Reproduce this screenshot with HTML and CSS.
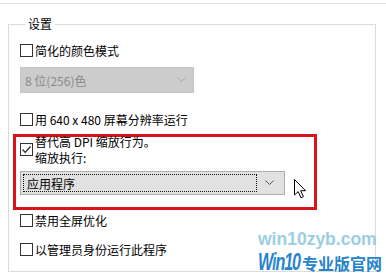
FILE: index.html
```html
<!DOCTYPE html>
<html lang="zh-CN">

<head>
    <meta charset="utf-8">
    <meta name="viewport" content="width=device-width, initial-scale=1.0">
    <title>兼容性设置</title>

    <link rel="stylesheet" href="styles.css">
</head>

<body>

    <div class="topline"></div>

    <fieldset class="gruppe">
        <legend>设置</legend>

        <label class="valg">
            <span class="boks"></span>
            <span>简化的颜色模式</span>
        </label>

        <div class="combo slukket">
            <span>8 位(256)色</span>
            <svg class="pil" width="9" height="6" viewBox="0 0 9 6"><path d="M0.5 0.5 L4.5 4.5 L8.5 0.5" fill="none" stroke="#a8a8a8"/></svg>
        </div>

        <label class="valg raekke3">
            <span class="boks"></span>
            <span>用 640 x 480 屏幕分辨率运行</span>
        </label>

        <section class="markering">
            <div class="dpi">
                <span class="boks flueben">
                    <svg width="11" height="11" viewBox="0 0 11 11"><path d="M1.5 5.5 L4.2 8.3 L9.5 2.5" fill="none" stroke="#222" stroke-width="1.2"/></svg>
                </span>
                <div class="tekst">
                    <p>替代高 DPI 缩放行为。</p>
                    <p>缩放执行:</p>
                </div>
            </div>
            <div class="comborad">
                <div class="combo aktiv">
                    <span class="fokus">应用程序</span>
                    <svg class="pil" width="9" height="6" viewBox="0 0 9 6"><path d="M0.5 0.5 L4.5 4.5 L8.5 0.5" fill="none" stroke="#555"/></svg>
                </div>
                <svg class="markoer" width="13" height="20" viewBox="0 0 13 20">
                    <path d="M0.5 0.5 L0.5 16 L4.2 12.6 L7 18.8 L9.4 17.7 L6.7 11.7 L11.6 11.7 Z" fill="#fff" stroke="#000" stroke-linejoin="round"/>
                </svg>
            </div>
        </section>

        <label class="valg efter">
            <span class="boks"></span>
            <span>禁用全屏优化</span>
        </label>

        <label class="valg sidste">
            <span class="boks"></span>
            <span>以管理员身份运行此程序</span>
        </label>
    </fieldset>

    <div class="vandmaerke">
        <p class="domaene">win10zyb.com</p>
        <p class="logo"><span class="win">W<span class="i">i</span>n10</span><span class="zh">专业版官网</span></p>
    </div>

</body></html>
```

FILE: styles.css
```css
        body {
            margin: 0;
            width: 386px;
            height: 277px;
            overflow: hidden;
            position: relative;
            background: #fff;
            font-family: "Noto Sans CJK SC", "Liberation Sans", sans-serif;
            font-size: 12px;
            color: #000;
        }

        p {
            margin: 0;
        }

        .topline {
            height: 3px;
            border-bottom: 1px solid #e3e3e3;
        }

        .gruppe {
            margin: 12px 10px 0 8px;
            padding: 0 0 12px 11px;
            border: 1px solid #dcdcdc;
            min-width: 0;
        }

        .gruppe legend {
            padding: 0 3px;
            margin-left: 5px;
            line-height: 16px;
        }

        .valg {
            display: flex;
            align-items: center;
            height: 20px;
            gap: 2px;
            margin-top: 8px;
        }

        .raekke3 {
            margin-top: 16px;
        }

        .efter {
            margin-top: 0;
        }

        .sidste {
            margin-top: 9px;
        }

        .boks {
            width: 11px;
            height: 11px;
            border: 1px solid #333;
            background: #fff;
            flex: none;
        }

        .flueben svg {
            display: block;
        }

        .combo {
            display: flex;
            align-items: center;
            justify-content: space-between;
            box-sizing: border-box;
        }

        .slukket {
            width: 174px;
            height: 26px;
            margin-top: 7px;
            padding: 0 7px 0 4px;
            background: #cccccc;
            border: 1px solid #c4c4c4;
            color: #8a8a8a;
        }

        .markering {
            width: 304px;
            height: 76px;
            box-sizing: border-box;
            margin: 5px 0 0 -7px;
            padding: 0 0 0 4px;
            border: 3px solid #d5141c;
        }

        .dpi {
            display: flex;
            gap: 2px;
        }

        .dpi .flueben {
            margin-top: 6px;
        }

        .tekst {
            margin-top: -3px;
            line-height: 16px;
        }

        .comborad {
            display: flex;
            align-items: flex-start;
            gap: 9px;
            margin-top: 5px;
        }

        .aktiv {
            width: 265px;
            height: 24px;
            padding: 2px 10px 2px 2px;
            background: #e1e1e1;
            border: 1px solid #adadad;
        }

        .fokus {
            flex: 1;
            height: 18px;
            line-height: 18px;
            padding-left: 3px;
            margin-right: 8px;
            border: 1px dotted #111;
            box-sizing: border-box;
        }

        .markoer {
            margin-top: 8px;
        }

        .vandmaerke {
            position: absolute;
            left: 258px;
            top: 229px;
            width: 124px;
        }

        .domaene {
            font-family: "Liberation Sans", sans-serif;
            font-weight: bold;
            font-size: 17.5px;
            line-height: 20px;
            color: #92c9e1;
            opacity: 0.9;
        }

        .logo {
            display: flex;
            align-items: baseline;
            line-height: 26px;
            color: #2684cb;
            white-space: nowrap;
        }

        .win {
            font-family: "Liberation Sans", sans-serif;
            font-style: italic;
            font-weight: bold;
            font-size: 23px;
            letter-spacing: -1.5px;
            display: inline-block;
            transform: scaleX(0.7);
            transform-origin: left;
            margin-right: -17px;
        }

        .win .i {
            color: #3591d4;
        }

        .zh {
            font-weight: bold;
            font-size: 16px;
            margin-left: 1px;
        }
```
